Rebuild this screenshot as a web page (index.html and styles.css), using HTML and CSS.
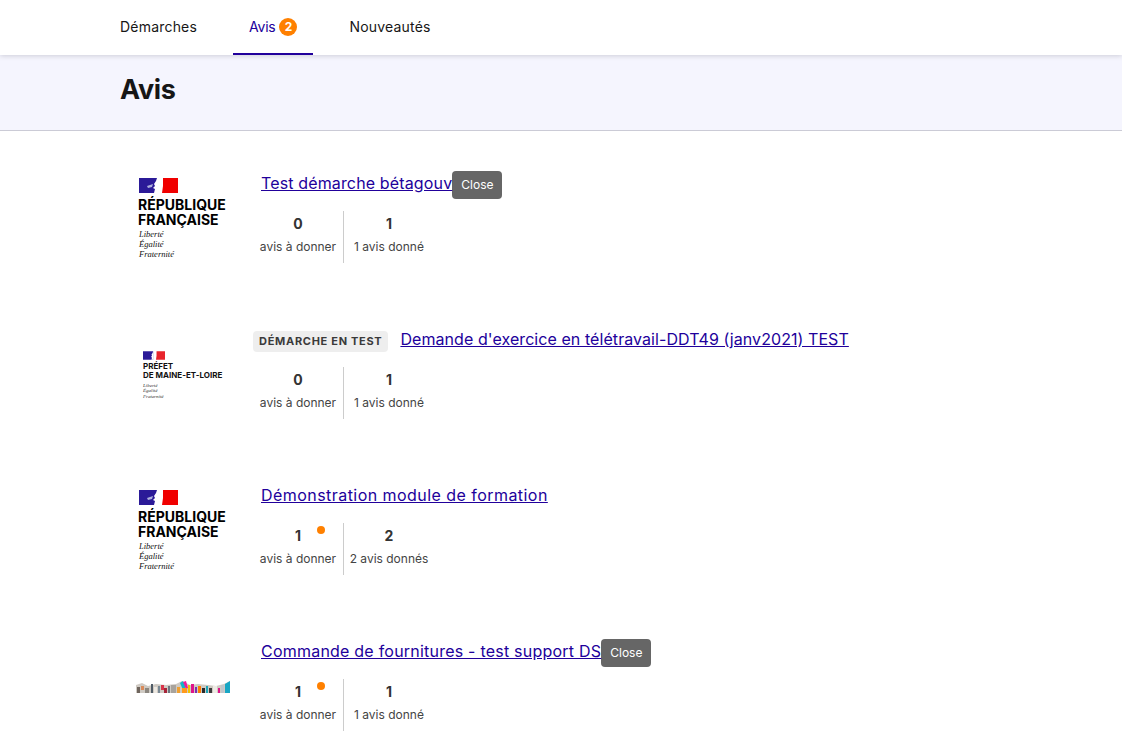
FILE: index.html
```html
<!DOCTYPE html>
<html lang="fr">
<head>
  <meta charset="UTF-8">
  <title>Avis</title>
  <link rel="stylesheet" href="styles.css">
</head>
<body>
  <header class="topbar">
    <nav class="tabs">
      <a class="tab" href="#">Démarches</a>
      <a class="tab tab-active" href="#">Avis <span class="counter">2</span></a>
      <a class="tab" href="#">Nouveautés</a>
    </nav>
  </header>

  <section class="hero">
    <h1>Avis</h1>
  </section>

  <main class="list">
    <!-- Test démarche -->
    <article class="row">
      <div class="logo-col">
        <div class="logo-rf">
          <svg class="flag" viewBox="0 0 39 15">
            <rect width="39" height="15" fill="#fff"/>
            <rect width="18" height="15" fill="#2b1a98"/>
            <path d="M24 0 H39 V15 H23 L24 8 Z" fill="#f00000"/>
            <path d="M18 0 L17 3 L15 6 L16 8 L14 10 L16 11 L15 15 H18 Z" fill="#fff"/>
            <path d="M8 8 L14 6 L13 9 L9 10 Z" fill="#aeb0dc"/>
          </svg>
          <div class="rf-name">RÉPUBLIQUE<br>FRANÇAISE</div>
          <div class="rf-motto">Liberté<br>Égalité<br>Fraternité</div>
        </div>
      </div>
      <div class="content">
        <div class="title-line">
          <a class="title" href="#">Test démarche bétagouv</a><span class="tooltip">Close</span>
        </div>
        <div class="stats">
          <div class="stat stat-first">
            <div class="stat-num">0</div>
            <div class="stat-label">avis à donner</div>
          </div>
          <div class="stat">
            <div class="stat-num">1</div>
            <div class="stat-label">1 avis donné</div>
          </div>
        </div>
      </div>
    </article>

    <!-- Démarche en test -->
    <article class="row">
      <div class="logo-col">
        <div class="logo-prefet">
          <svg class="flag-small" viewBox="0 0 39 15">
            <rect width="39" height="15" fill="#fff"/>
            <rect width="18" height="15" fill="#2b1a98"/>
            <path d="M24 0 H39 V15 H23 L24 8 Z" fill="#e8242c"/>
            <path d="M18 0 L17 3 L15 6 L16 8 L14 10 L16 11 L15 15 H18 Z" fill="#fff"/>
          </svg>
          <div class="prefet-name">PRÉFET<br>DE MAINE-ET-LOIRE</div>
          <div class="prefet-motto">Liberté<br>Égalité<br>Fraternité</div>
        </div>
      </div>
      <div class="content">
        <div class="title-line title-line-tag">
          <span class="tag">DÉMARCHE EN TEST</span>
          <a class="title title-long" href="#">Demande d'exercice en télétravail-DDT49 (janv2021) TEST</a>
        </div>
        <div class="stats">
          <div class="stat stat-first">
            <div class="stat-num">0</div>
            <div class="stat-label">avis à donner</div>
          </div>
          <div class="stat">
            <div class="stat-num">1</div>
            <div class="stat-label">1 avis donné</div>
          </div>
        </div>
      </div>
    </article>

    <!-- Formation -->
    <article class="row">
      <div class="logo-col">
        <div class="logo-rf">
          <svg class="flag" viewBox="0 0 39 15">
            <rect width="39" height="15" fill="#fff"/>
            <rect width="18" height="15" fill="#2b1a98"/>
            <path d="M24 0 H39 V15 H23 L24 8 Z" fill="#f00000"/>
            <path d="M18 0 L17 3 L15 6 L16 8 L14 10 L16 11 L15 15 H18 Z" fill="#fff"/>
            <path d="M8 8 L14 6 L13 9 L9 10 Z" fill="#aeb0dc"/>
          </svg>
          <div class="rf-name">RÉPUBLIQUE<br>FRANÇAISE</div>
          <div class="rf-motto">Liberté<br>Égalité<br>Fraternité</div>
        </div>
      </div>
      <div class="content">
        <div class="title-line">
          <a class="title title-wide" href="#">Démonstration module de formation</a>
        </div>
        <div class="stats">
          <div class="stat stat-first">
            <div class="stat-num">1</div>
            <span class="dot"></span>
            <div class="stat-label">avis à donner</div>
          </div>
          <div class="stat">
            <div class="stat-num">2</div>
            <div class="stat-label">2 avis donnés</div>
          </div>
        </div>
      </div>
    </article>

    <!-- Fournitures -->
    <article class="row">
      <div class="logo-col">
        <svg class="strip" viewBox="0 0 94 12">
          <path d="M0 4 L6 2 L12 5 L20 3 L30 4 L40 3 L46 0 L54 4 L62 3 L72 4 L80 5 L88 3 L94 0 V12 H0 Z" fill="#cfcac3"/>
          <rect x="1" y="6" width="3" height="6" fill="#6f655d"/>
          <rect x="5" y="5" width="3" height="4" fill="#d98a5a"/>
          <rect x="9" y="7" width="4" height="5" fill="#8c8780"/>
          <rect x="15" y="3" width="2" height="9" fill="#4f5b66"/>
          <rect x="18" y="6" width="3" height="6" fill="#eee9e2"/>
          <rect x="22" y="5" width="2" height="7" fill="#7a8a96"/>
          <rect x="25" y="4" width="3" height="5" fill="#d8344a"/>
          <rect x="28" y="7" width="3" height="5" fill="#a6243a"/>
          <rect x="32" y="5" width="2" height="7" fill="#6b7680"/>
          <rect x="35" y="4" width="5" height="8" fill="#a8a39c"/>
          <rect x="41" y="6" width="3" height="6" fill="#f0a030"/>
          <path d="M44 2 L47 0 L50 6 L47 9 Z" fill="#12b5c9"/>
          <path d="M47 1 L50 0 L52 7 L50 8 Z" fill="#f01a9a"/>
          <rect x="46" y="7" width="5" height="5" fill="#ff9a1c"/>
          <rect x="52" y="4" width="2" height="8" fill="#f2c200"/>
          <rect x="55" y="3" width="3" height="9" fill="#e0148a"/>
          <rect x="59" y="6" width="2" height="6" fill="#7b2fb0"/>
          <rect x="62" y="5" width="3" height="7" fill="#ff7a00"/>
          <rect x="66" y="7" width="3" height="5" fill="#2a2a2a"/>
          <rect x="70" y="5" width="2" height="7" fill="#1aa5b8"/>
          <rect x="73" y="7" width="3" height="5" fill="#3c3c3c"/>
          <rect x="77" y="5" width="4" height="7" fill="#efebe5"/>
          <rect x="82" y="7" width="2" height="5" fill="#e0148a"/>
          <rect x="85" y="4" width="3" height="8" fill="#bfc6cc"/>
          <path d="M89 3 L94 0 V12 H89 Z" fill="#18a6c4"/>
        </svg>
      </div>
      <div class="content">
        <div class="title-line">
          <a class="title title-mid" href="#">Commande de fournitures - test support DS</a><span class="tooltip">Close</span>
        </div>
        <div class="stats">
          <div class="stat stat-first">
            <div class="stat-num">1</div>
            <span class="dot"></span>
            <div class="stat-label">avis à donner</div>
          </div>
          <div class="stat">
            <div class="stat-num">1</div>
            <div class="stat-label">1 avis donné</div>
          </div>
        </div>
      </div>
    </article>
  </main>
</body>
</html>
```

FILE: styles.css
```css
html, body {
  height: 744px;
  overflow: hidden;
}

body {
  margin: 0;
  font-family: "Inter", "Liberation Sans", sans-serif;
  color: #161616;
  background: #fff;
}

.topbar {
  position: relative;
  height: 55px;
  padding-left: 104px;
  background: #fff;
  box-shadow: 0 1px 5px rgba(0, 0, 18, 0.16);
}

.tabs {
  display: flex;
  gap: 20px;
}

.tab {
  display: flex;
  align-items: center;
  gap: 4px;
  height: 53px;
  padding: 0 16px;
  font-size: 14px;
  letter-spacing: 0.2px;
  color: #161616;
  text-decoration: none;
  border-bottom: 2px solid transparent;
}

.tab-active {
  letter-spacing: -0.25px;
  color: #21009b;
  border-bottom-color: #21009b;
}

.counter {
  width: 18px;
  height: 18px;
  border-radius: 50%;
  background: #ff8000;
  color: #fff;
  font-size: 12px;
  font-weight: 700;
  line-height: 18px;
  text-align: center;
}

.hero {
  height: 75px;
  padding-left: 120px;
  background: #f5f5fe;
  border-bottom: 1px solid #cbcbd6;
}

.hero h1 {
  margin: 0;
  font-size: 27px;
  font-weight: 700;
  letter-spacing: -0.4px;
  line-height: 69px;
}

.list {
  display: flex;
  flex-direction: column;
  gap: 64px;
  padding: 40px 0 0 120px;
}

.row {
  display: flex;
}

.logo-col {
  display: flex;
  align-items: center;
  width: 133px;
  padding-top: 3px;
  box-sizing: border-box;
}

.logo-rf {
  margin-left: 18px;
}

.flag {
  display: block;
  width: 39px;
  height: 15px;
  margin-left: 1px;
}

.rf-name {
  margin-top: 4px;
  font-size: 14px;
  font-weight: 700;
  line-height: 15px;
  color: #000;
}

.rf-motto {
  margin-top: 2px;
  margin-left: 1px;
  font-family: "Liberation Serif", serif;
  font-size: 8.5px;
  font-style: italic;
  line-height: 10px;
  color: #111;
}

.logo-prefet {
  margin: 1px 0 0 23px;
}

.flag-small {
  display: block;
  width: 22px;
  height: 9px;
}

.prefet-name {
  margin-top: 2px;
  font-size: 8px;
  font-weight: 700;
  line-height: 9px;
  color: #111;
}

.prefet-motto {
  margin-top: 3px;
  font-family: "Liberation Serif", serif;
  font-size: 5px;
  font-style: italic;
  line-height: 5.5px;
  color: #333;
}

.strip {
  display: block;
  width: 94px;
  height: 12px;
  margin-left: 16px;
}

.title-line {
  display: flex;
  align-items: center;
  height: 28px;
  margin-bottom: 12px;
  padding-left: 8px;
}

.title-line-tag {
  padding-left: 0;
}

.title {
  font-size: 16px;
  letter-spacing: 0.14px;
  color: #21009b;
  position: relative;
  top: -2px;
}

.title-long {
  letter-spacing: 0.07px;
}

.title-mid {
  letter-spacing: 0.22px;
}

.title-wide {
  letter-spacing: 0.45px;
}

.tooltip {
  height: 28px;
  padding: 0 9px;
  border-radius: 4px;
  background: #666;
  color: #fff;
  font-size: 12px;
  line-height: 28px;
}

.tag {
  height: 21px;
  margin-right: 12px;
  padding: 0 6px;
  border-radius: 4px;
  background: #eee;
  color: #3a3a3a;
  font-size: 11px;
  font-weight: 700;
  letter-spacing: 0.7px;
  line-height: 21px;
}

.stats {
  display: flex;
  height: 52px;
}

.stat {
  position: relative;
  width: 90px;
  text-align: center;
}

.stat-first {
  border-right: 1px solid #ccc;
}

.stat-num {
  margin-top: 3px;
  font-size: 14px;
  font-weight: 700;
  line-height: 20px;
  color: #333;
}

.stat-label {
  margin-top: 5px;
  font-size: 12px;
  line-height: 16px;
  color: #444;
}

.dot {
  position: absolute;
  top: 3px;
  left: 64px;
  width: 8px;
  height: 8px;
  border-radius: 50%;
  background: #ff8000;
}
```
